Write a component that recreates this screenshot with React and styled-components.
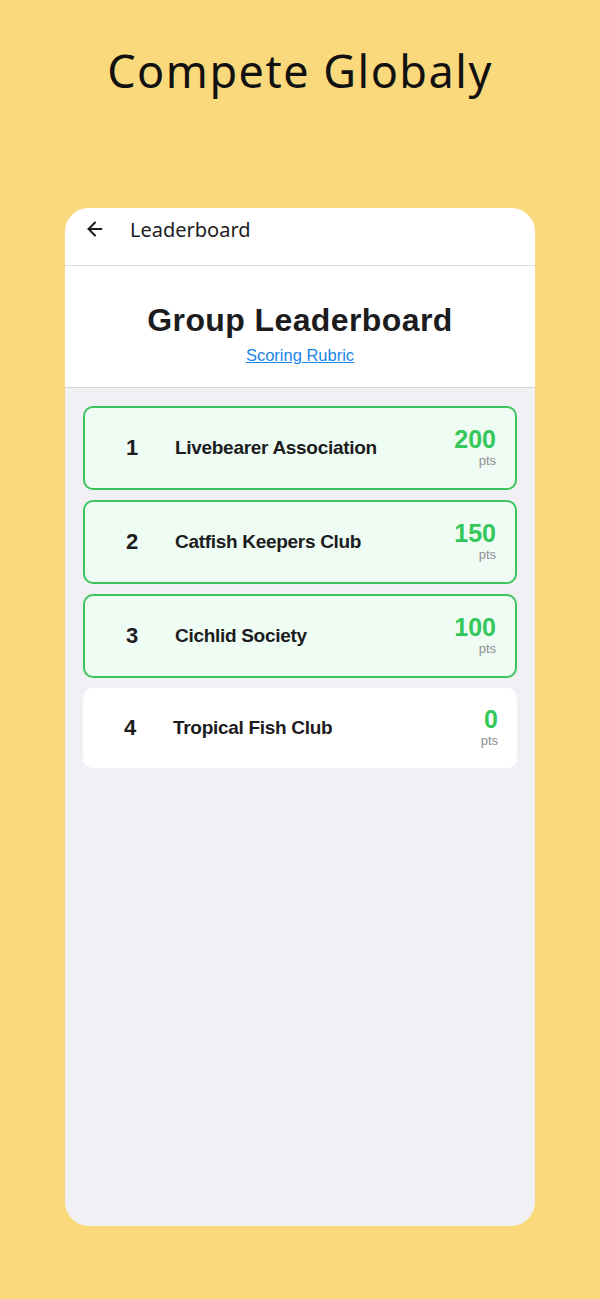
import styled, { createGlobalStyle } from 'styled-components'
import { ArrowLeft } from 'lucide-react'

const Global = createGlobalStyle`
  html, body {
    margin: 0;
    padding: 0;
    background: #f9d97b;
  }
  * { box-sizing: border-box; }
`

const groups = [
  { rank: 1, name: 'Livebearer Association', points: 200, top: true },
  { rank: 2, name: 'Catfish Keepers Club', points: 150, top: true },
  { rank: 3, name: 'Cichlid Society', points: 100, top: true },
  { rank: 4, name: 'Tropical Fish Club', points: 0, top: false },
]

export default function App() {
  return (
    <Page>
      <Global />
      <Headline>Compete Globaly</Headline>
      <Phone>
        <TopBar>
          <ArrowLeft size={22} strokeWidth={2.2} color="#1c1c1e" />
          <TopTitle>Leaderboard</TopTitle>
        </TopBar>
        <Hero>
          <HeroTitle>Group Leaderboard</HeroTitle>
          <RubricLink href="#">Scoring Rubric</RubricLink>
        </Hero>
        <List>
          {groups.map((g) => (
            <Row key={g.rank} $top={g.top}>
              <Rank>{g.rank}</Rank>
              <Name>{g.name}</Name>
              <Score>
                <Points>{g.points}</Points>
                <Unit>pts</Unit>
              </Score>
            </Row>
          ))}
        </List>
      </Phone>
    </Page>
  )
}

const Page = styled.div`
  width: 600px;
  height: 1299px;
  padding: 43px 65px 0;
  display: flex;
  flex-direction: column;
  align-items: center;
`

const Headline = styled.h1`
  margin: 0;
  font-family: 'Noto Sans', sans-serif;
  font-weight: 400;
  font-size: 45px;
  letter-spacing: 1.5px;
  line-height: 56px;
  color: #111;
`

const Phone = styled.div`
  margin-top: 109px;
  width: 470px;
  height: 1018px;
  border-radius: 24px;
  background: #f1f1f5;
  overflow: hidden;
  display: flex;
  flex-direction: column;
`

const TopBar = styled.div`
  height: 58px;
  background: #fff;
  border-bottom: 1px solid #dcdcdf;
  display: flex;
  align-items: center;
  padding: 0 0 15px 19px;
  gap: 24px;
`

const TopTitle = styled.span`
  font-family: 'Noto Sans', sans-serif;
  font-size: 20px;
  color: #1c1c1e;
`

const Hero = styled.div`
  background: #fff;
  height: 122px;
  border-bottom: 1px solid #d4d4d8;
  display: flex;
  flex-direction: column;
  align-items: center;
  padding-top: 35px;
`

const HeroTitle = styled.h2`
  margin: 0;
  font-family: 'Liberation Sans', Arial, sans-serif;
  font-weight: 700;
  font-size: 32px;
  line-height: 38px;
  color: #1c1c1e;
  letter-spacing: 0.4px;
`

const RubricLink = styled.a`
  margin-top: 6px;
  font-family: 'Liberation Sans', Arial, sans-serif;
  font-size: 16.5px;
  line-height: 20px;
  color: #1a84e8;
  text-decoration: underline;
`

const List = styled.div`
  display: flex;
  flex-direction: column;
  gap: 10px;
  padding: 18px 18px;
`

const Row = styled.div`
  display: flex;
  align-items: center;
  height: ${(p) => (p.$top ? '84px' : '80px')};
  border-radius: 10px;
  border: ${(p) => (p.$top ? '2px solid #3cc45e' : 'none')};
  background: ${(p) => (p.$top ? '#effcf3' : '#fff')};
  padding: 0 19px 0 41px;
  font-family: 'Liberation Sans', Arial, sans-serif;
`

const Rank = styled.span`
  width: 49px;
  font-weight: 700;
  font-size: 22px;
  color: #1c1c1e;
`

const Name = styled.span`
  flex: 1;
  font-weight: 700;
  font-size: 19px;
  letter-spacing: -0.3px;
  color: #1c1c1e;
`

const Score = styled.div`
  display: flex;
  flex-direction: column;
  align-items: flex-end;
  margin-top: -4px;
`

const Points = styled.span`
  font-weight: 700;
  font-size: 25px;
  line-height: 28px;
  color: #34c759;
`

const Unit = styled.span`
  font-size: 13px;
  line-height: 15px;
  color: #8e8e93;
`
